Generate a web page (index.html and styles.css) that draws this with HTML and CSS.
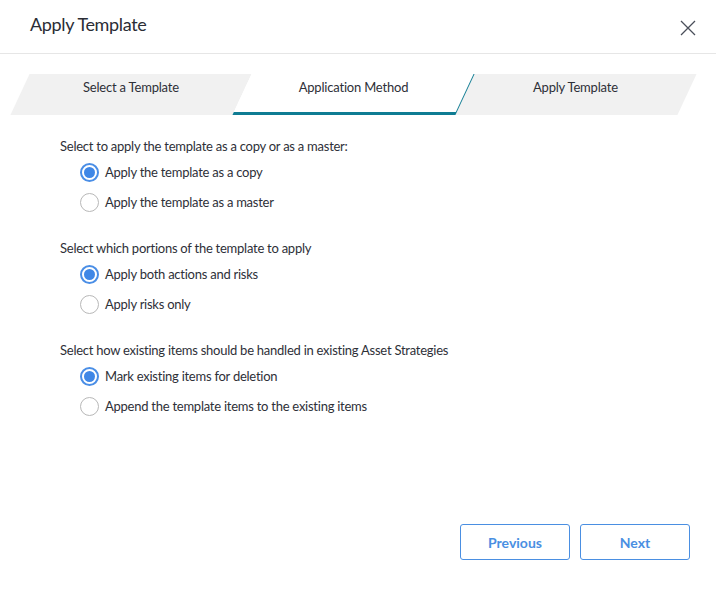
FILE: index.html
```html
<html>
<head>
  <title>Apply Template</title>
  <link rel="stylesheet" href="styles.css">
</head>
<body>
<div class="dialog">
  <div class="header">
    <h1 class="title">Apply Template</h1>
    <svg class="close" width="16" height="16" viewBox="0 0 16 16"><path d="M1 1 L15 15 M15 1 L1 15" stroke="#4a4f5a" stroke-width="1.3" fill="none"/></svg>
  </div>

  <div class="steps">
    <div class="step"><span class="step-text">Select a Template</span></div>
    <div class="step active"><span class="step-text">Application Method</span></div>
    <div class="step"><span class="step-text">Apply Template</span></div>
  </div>

  <div class="content">
    <div class="group">
      <p class="question">Select to apply the template as a copy or as a master:</p>
      <label class="option"><span class="radio checked"></span>Apply the template as a copy</label>
      <label class="option"><span class="radio"></span>Apply the template as a master</label>
    </div>
    <div class="group">
      <p class="question">Select which portions of the template to apply</p>
      <label class="option"><span class="radio checked"></span>Apply both actions and risks</label>
      <label class="option"><span class="radio"></span>Apply risks only</label>
    </div>
    <div class="group">
      <p class="question">Select how existing items should be handled in existing Asset Strategies</p>
      <label class="option"><span class="radio checked"></span>Mark existing items for deletion</label>
      <label class="option"><span class="radio"></span>Append the template items to the existing items</label>
    </div>
  </div>

  <div class="footer">
    <button class="btn">Previous</button>
    <button class="btn">Next</button>
  </div>
</div>
</body>
</html>
```

FILE: styles.css
```css
body {margin: 0; background: #fff; font-family: Lato, "Liberation Sans", sans-serif; color: #2e3038;}

.dialog {width: 716px; height: 614px; display: flex; flex-direction: column;}

.header {height: 54px; border-bottom: 1px solid #e6e6e6; display: flex; align-items: center; justify-content: space-between; padding: 0 20px 0 30px; box-sizing: border-box;}
.title {margin: 0; font-size: 18px; font-weight: normal; letter-spacing: -0.35px; color: #2b2d35; position: relative; top: -3px;}
.close {position: relative; top: 1px;}

.steps {display: flex; margin: 20px 0 0 20px; width: 667px; height: 41px;}
.step {flex: 1; background: #f1f1f1; transform: skewX(-25deg); display: flex; justify-content: center; box-sizing: border-box;}
.step.active {background: #fff; border-bottom: 3px solid #0f7c93; border-right: 2.5px solid #0f7c93;}
.step-text {transform: skewX(25deg); font-size: 13px; letter-spacing: -0.2px; padding-top: 5px; color: #2e3038;}

.content {padding: 22px 0 0 60px; flex: 1;}
.group {margin-bottom: 22px;}
.question {margin: 0 0 2px 0; font-size: 13px; letter-spacing: -0.25px; line-height: 18px;}
.option {display: flex; align-items: center; height: 30px; padding-left: 20px; font-size: 13px; letter-spacing: -0.25px;}
.radio {width: 17px; height: 17px; border: 1px solid #b8b8b8; border-radius: 50%; margin-right: 6px; box-sizing: content-box; position: relative; background: #fff;}
.radio.checked {border: 2px solid #4a8ee6; width: 15px; height: 15px;}
.radio.checked::after {content: ""; position: absolute; left: 2px; top: 2px; width: 11px; height: 11px; border-radius: 50%; background: #3f87e6;}

.footer {display: flex; justify-content: flex-end; gap: 10px; padding: 0 26px 54px 0;}
.btn {width: 110px; height: 36px; background: #fff; border: 1px solid #4a8fe2; border-radius: 3px; color: #4a8fe2; font-family: Lato, "Liberation Sans", sans-serif; font-size: 14px; font-weight: bold;}
```
